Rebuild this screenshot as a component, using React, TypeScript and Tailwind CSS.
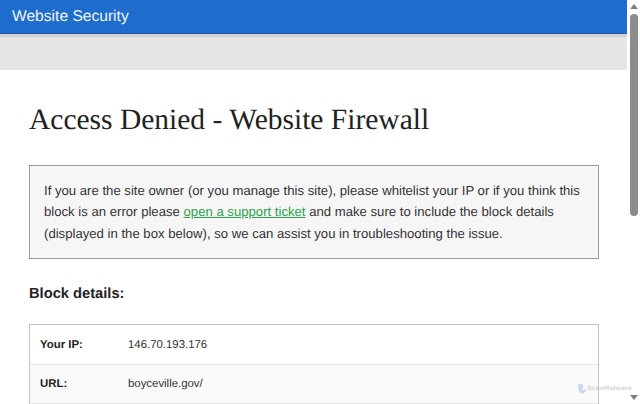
import React from "react";

const SANS = "font-['Liberation_Sans',Arial,sans-serif]";

// Rows of the block details table
const ROWS = [
  { label: "Your IP:", value: "146.70.193.176", shade: false },
  { label: "URL:", value: "boyceville.gov/", shade: true },
];

function Scrollbar() {
  return (
    <div className="w-[13px] h-full shrink-0 bg-white flex flex-col items-center">
      <div className="mt-[4px] w-0 h-0 border-l-[4px] border-r-[4px] border-b-[5px] border-l-transparent border-r-transparent border-b-[#7f7f7f]" />
      <div className="mt-[5px] w-2 h-[202px] rounded-full bg-[#8c8c8c]" />
      <div className="mt-auto mb-[4px] w-0 h-0 border-l-[4px] border-r-[4px] border-t-[5px] border-l-transparent border-r-transparent border-t-[#7f7f7f]" />
    </div>
  );
}

export default function App() {
  return (
    <div className={`relative w-[640px] h-[404px] overflow-hidden flex bg-white [text-rendering:geometricPrecision] ${SANS}`}>
      <div className="w-[627px] h-full shrink-0 overflow-hidden">
        {/* Header */}
        <div className="h-[34px] bg-[#1e6ccb] border-b border-[#1a5cae] pl-3 flex items-center text-[15.6px] text-[#eef4fb]">
          Website Security
        </div>
        <div className="h-[36px] bg-[#e6e6e6] border-t-[3px] border-[#d2d2d2]" />

        <div className="pl-[29px] pr-[28px]">
          <h1 className="mt-[34px] text-[29.5px] leading-[32px] font-normal text-[#222] font-['Liberation_Serif','Times_New_Roman',serif]">
            Access Denied - Website Firewall
          </h1>

          {/* Notice */}
          <div className="mt-[29px] h-[94px] border border-[#999] bg-[#f6f6f6] px-[14px] pt-[13.7px] text-[13.15px] leading-[21.5px] text-[#333]">
            If you are the site owner (or you manage this site), please whitelist your IP or if you think this block is an error please{" "}
            <a href="#" className="text-[#2ba24c] underline">open a support ticket</a>{" "}
            and make sure to include the block details (displayed in the box below), so we can assist you in troubleshooting the issue.
          </div>

          <h2 className="mt-[26px] text-[14.7px] leading-[18px] font-bold text-[#222]">Block details:</h2>

          {/* Details table */}
          <div className="mt-[21px] border border-[#c4c4c4] text-[11.4px] text-[#333]">
            {ROWS.map((row) => (
              <div
                key={row.label}
                className={`h-[39.5px] flex items-center border-b border-[#e6e6e6] px-[10px] pt-[2px] ${row.shade ? "bg-[#fafafa]" : "bg-white"}`}
              >
                <span className="w-[88px] font-bold text-[#222]">{row.label}</span>
                <span>{row.value}</span>
              </div>
            ))}
          </div>
        </div>
      </div>

      <Scrollbar />

      {/* Watermark over the page */}
      <div className="absolute left-[578px] top-[384px] flex items-center opacity-60">
        <svg width="9" height="10" viewBox="0 0 9 10">
          <path d="M0 0h4l2 3-2 1 1 2 3-1v2L5 10 1 8z" fill="#a9c4ee" />
        </svg>
        <span className="text-[6px] leading-[10px] font-bold font-['DejaVu_Sans',sans-serif] text-[#b9bcc4]">ScanMalware</span>
      </div>
    </div>
  );
}
